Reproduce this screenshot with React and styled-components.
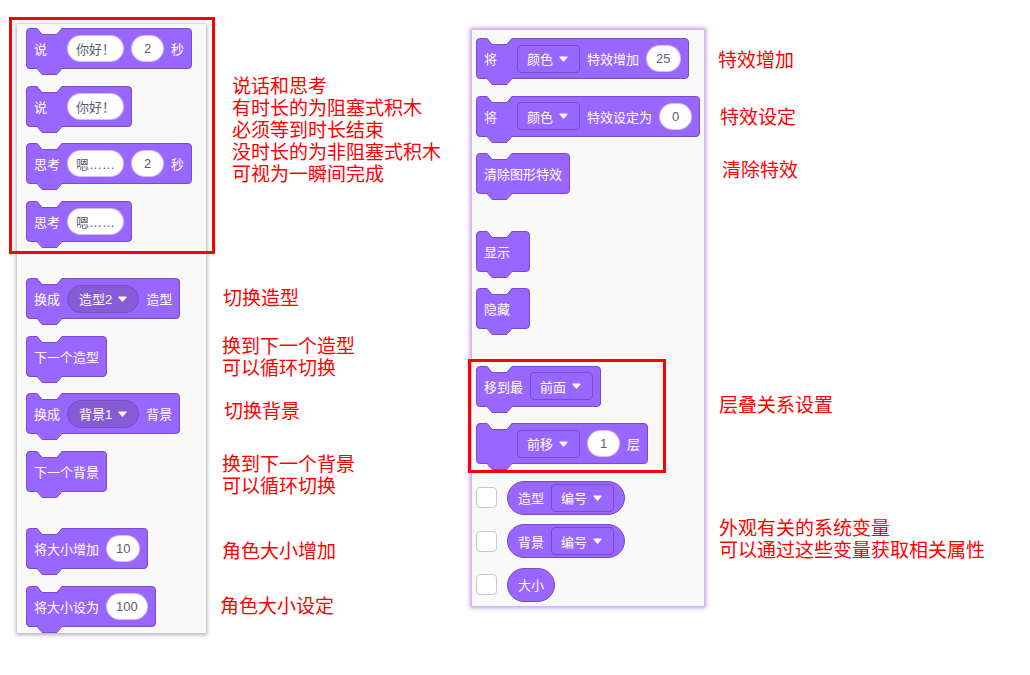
import React from 'react';
import styled, { createGlobalStyle } from 'styled-components';

const BLOCK = '#9966ff';
const BLOCK_DARK = '#855cd6';
const BLOCK_EDGE = '#774dcb';
const PANEL = '#f9f9f9';

const svgUrl = (s) => `url("data:image/svg+xml,${encodeURIComponent(s)}")`;

// the dent in the top edge of a stack block, and the tab under it
const notch = svgUrl(
  `<svg xmlns='http://www.w3.org/2000/svg' width='25' height='7'><path d='M0 0H25L20 6H5Z' fill='${PANEL}'/><path d='M0 .5L5 6.5H20L25 .5' fill='none' stroke='${BLOCK_EDGE}'/></svg>`
);
const tab = svgUrl(
  `<svg xmlns='http://www.w3.org/2000/svg' width='25' height='7'><path d='M0 0H25L20 6H5Z' fill='${BLOCK}'/><path d='M0 .5L5 6.5H20L25 .5' fill='none' stroke='${BLOCK_EDGE}'/></svg>`
);

const GlobalStyle = createGlobalStyle`
  html, body {
    margin: 0;
    padding: 0;
    background: #fff;
  }
  body {
    font-family: "Liberation Sans", "Noto Sans CJK SC", sans-serif;
  }
`;

const Page = styled.div`
  display: flex;
  align-items: flex-start;
  width: 1030px;
  height: 675px;
  overflow: hidden;
`;

const Palette = styled.div`
  flex: none;
  box-sizing: border-box;
  display: flex;
  flex-direction: column;
  align-items: flex-start;
  gap: 16.5px;
  width: ${p => p.$width}px;
  height: ${p => p.$height}px;
  margin: ${p => p.$top}px 0 0 ${p => p.$left || 0}px;
  padding: ${p => p.$pad};
  background: ${PANEL};
  border: ${p => p.$tint ? '1px solid #d2b6ec' : 'none'};
  box-shadow: ${p => p.$tint
    ? '0 0 4px 1px rgba(150, 70, 210, 0.55)'
    : '0 1px 4px 1px rgba(90, 70, 110, 0.45)'};
`;

const Group = styled.div`
  position: relative;
  display: flex;
  flex-direction: column;
  align-items: flex-start;
  gap: 16.5px;
  margin-top: ${p => p.$sep ? '20px' : '0'};

  &::after {
    content: '';
    position: absolute;
    box-sizing: border-box;
    pointer-events: none;
    border: 3px solid #f00;
    left: ${p => p.$box[0]}px;
    top: ${p => p.$box[1]}px;
    width: ${p => p.$box[2]}px;
    height: ${p => p.$box[3]}px;
  }
`;

const Block = styled.div`
  position: relative;
  flex: none;
  box-sizing: border-box;
  display: flex;
  align-items: center;
  gap: 7px;
  height: 41px;
  min-width: 54px;
  padding: 0 7px;
  margin-top: ${p => p.$sep ? '20px' : '0'};
  background: ${BLOCK};
  border: 1px solid ${BLOCK_EDGE};
  border-radius: 4px;
  color: #fff;
  font-size: 13px;
  white-space: nowrap;

  &::before {
    content: '';
    position: absolute;
    top: -1px;
    left: 10px;
    width: 25px;
    height: 7px;
    background: ${notch};
  }

  &::after {
    content: '';
    position: absolute;
    top: 100%;
    left: 10px;
    width: 25px;
    height: 7px;
    background: ${tab};
  }
`;

const Label = styled.span`
  min-width: ${p => p.$lead ? '26px' : '0'};
`;

const Input = styled.span`
  box-sizing: border-box;
  display: inline-flex;
  align-items: center;
  justify-content: center;
  height: 27px;
  min-width: 33px;
  padding: 0 ${p => p.$text ? '8px' : '9px'};
  border-radius: 14px;
  background: #fff;
  border: 1px solid rgba(119, 77, 203, 0.35);
  color: #575e75;
  font-size: 13px;
`;

const Dropdown = styled.span`
  box-sizing: border-box;
  display: inline-flex;
  align-items: center;
  gap: 6px;
  height: 28px;
  padding: 0 11px 0 ${p => p.$round ? '11px' : '9px'};
  border-radius: ${p => p.$round ? '14px' : '4px'};
  background: ${p => p.$round ? BLOCK_DARK : BLOCK};
  border: 1px solid ${BLOCK_EDGE};
  color: #fff;
`;

const Caret = () => (
  <svg width="9" height="6" viewBox="0 0 9 6">
    <path d="M1 1H8L4.5 5Z" fill="#fff" stroke="#fff" strokeWidth="1.2" strokeLinejoin="round" />
  </svg>
);

const Menu = ({ children, round }) => (
  <Dropdown $round={round}>
    {children}
    <Caret />
  </Dropdown>
);

const ReporterList = styled.div`
  display: flex;
  flex-direction: column;
  gap: 9.5px;
`;

const ReporterRow = styled.div`
  display: flex;
  align-items: center;
  gap: 10px;
`;

const Checkbox = styled.span`
  box-sizing: border-box;
  width: 21px;
  height: 21px;
  border: 1px solid #c8c8c8;
  border-radius: 4px;
  background: #fff;
`;

const Reporter = styled.div`
  box-sizing: border-box;
  display: flex;
  align-items: center;
  gap: 7px;
  height: 34px;
  padding: 0 10px;
  border-radius: 17px;
  background: ${BLOCK};
  border: 1px solid ${BLOCK_EDGE};
  color: #fff;
  font-size: 13px;
  white-space: nowrap;
`;

const Notes = styled.div`
  flex: none;
  box-sizing: border-box;
  display: flex;
  flex-direction: column;
  align-items: flex-start;
  width: ${p => p.$width}px;
  padding-left: ${p => p.$pad}px;
`;

const Note = styled.div`
  margin-top: ${p => p.$top}px;
  margin-left: ${p => p.$indent || 0}px;
  color: #f00;
  font-family: "Noto Sans CJK SC", sans-serif;
  font-size: 19px;
  line-height: 22px;
  white-space: pre-line;
`;

export default function App() {
  return (
    <>
      <GlobalStyle />
      <Page>
        <Palette $left={17} $top={24} $width={189} $height={609} $pad="4px 0 0 9px">
          <Group $box={[-17, -11, 206, 237]}>
            <Block>
              <Label $lead>说</Label>
              <Input $text>你好！</Input>
              <Input>2</Input>
              <Label>秒</Label>
            </Block>
            <Block>
              <Label $lead>说</Label>
              <Input $text>你好！</Input>
            </Block>
            <Block>
              <Label $lead>思考</Label>
              <Input $text>嗯……</Input>
              <Input>2</Input>
              <Label>秒</Label>
            </Block>
            <Block>
              <Label $lead>思考</Label>
              <Input $text>嗯……</Input>
            </Block>
          </Group>
          <Block $sep>
            <Label $lead>换成</Label>
            <Menu round>造型2</Menu>
            <Label>造型</Label>
          </Block>
          <Block>
            <Label>下一个造型</Label>
          </Block>
          <Block>
            <Label $lead>换成</Label>
            <Menu round>背景1</Menu>
            <Label>背景</Label>
          </Block>
          <Block>
            <Label>下一个背景</Label>
          </Block>
          <Block $sep>
            <Label $lead>将大小增加</Label>
            <Input>10</Input>
          </Block>
          <Block>
            <Label $lead>将大小设为</Label>
            <Input>100</Input>
          </Block>
        </Palette>

        <Notes $width={265} $pad={14}>
          <Note $top={74} $indent={12}>
            {'说话和思考\n有时长的为阻塞式积木\n必须等到时长结束\n没时长的为非阻塞式积木\n可视为一瞬间完成'}
          </Note>
          <Note $top={102} $indent={3}>切换造型</Note>
          <Note $top={26} $indent={2}>{'换到下一个造型\n可以循环切换'}</Note>
          <Note $top={21} $indent={4}>切换背景</Note>
          <Note $top={31} $indent={2}>{'换到下一个背景\n可以循环切换'}</Note>
          <Note $top={43} $indent={2}>角色大小增加</Note>
          <Note $top={33} $indent={0}>角色大小设定</Note>
        </Notes>

        <Palette $top={29} $width={234} $height={578} $pad="8px 0 0 4px" $tint>
          <Block>
            <Label $lead>将</Label>
            <Menu>颜色</Menu>
            <Label>特效增加</Label>
            <Input>25</Input>
          </Block>
          <Block>
            <Label $lead>将</Label>
            <Menu>颜色</Menu>
            <Label>特效设定为</Label>
            <Input>0</Input>
          </Block>
          <Block>
            <Label>清除图形特效</Label>
          </Block>
          <Block $sep>
            <Label>显示</Label>
          </Block>
          <Block>
            <Label>隐藏</Label>
          </Block>
          <Group $sep $box={[-8, -6.5, 198, 114]}>
            <Block>
              <Label $lead>移到最</Label>
              <Menu>前面</Menu>
            </Block>
            <Block>
              <Label $lead />
              <Menu>前移</Menu>
              <Input>1</Input>
              <Label>层</Label>
            </Block>
          </Group>
          <ReporterList>
            <ReporterRow>
              <Checkbox />
              <Reporter>
                <Label>造型</Label>
                <Menu>编号</Menu>
              </Reporter>
            </ReporterRow>
            <ReporterRow>
              <Checkbox />
              <Reporter>
                <Label>背景</Label>
                <Menu>编号</Menu>
              </Reporter>
            </ReporterRow>
            <ReporterRow>
              <Checkbox />
              <Reporter>
                <Label>大小</Label>
              </Reporter>
            </ReporterRow>
          </ReporterList>
        </Palette>

        <Notes $width={300} $pad={13}>
          <Note $top={48}>特效增加</Note>
          <Note $top={35} $indent={2}>特效设定</Note>
          <Note $top={31} $indent={4}>清除特效</Note>
          <Note $top={213} $indent={1}>层叠关系设置</Note>
          <Note $top={101} $indent={1}>{'外观有关的系统变量\n可以通过这些变量获取相关属性'}</Note>
        </Notes>
      </Page>
    </>
  );
}
